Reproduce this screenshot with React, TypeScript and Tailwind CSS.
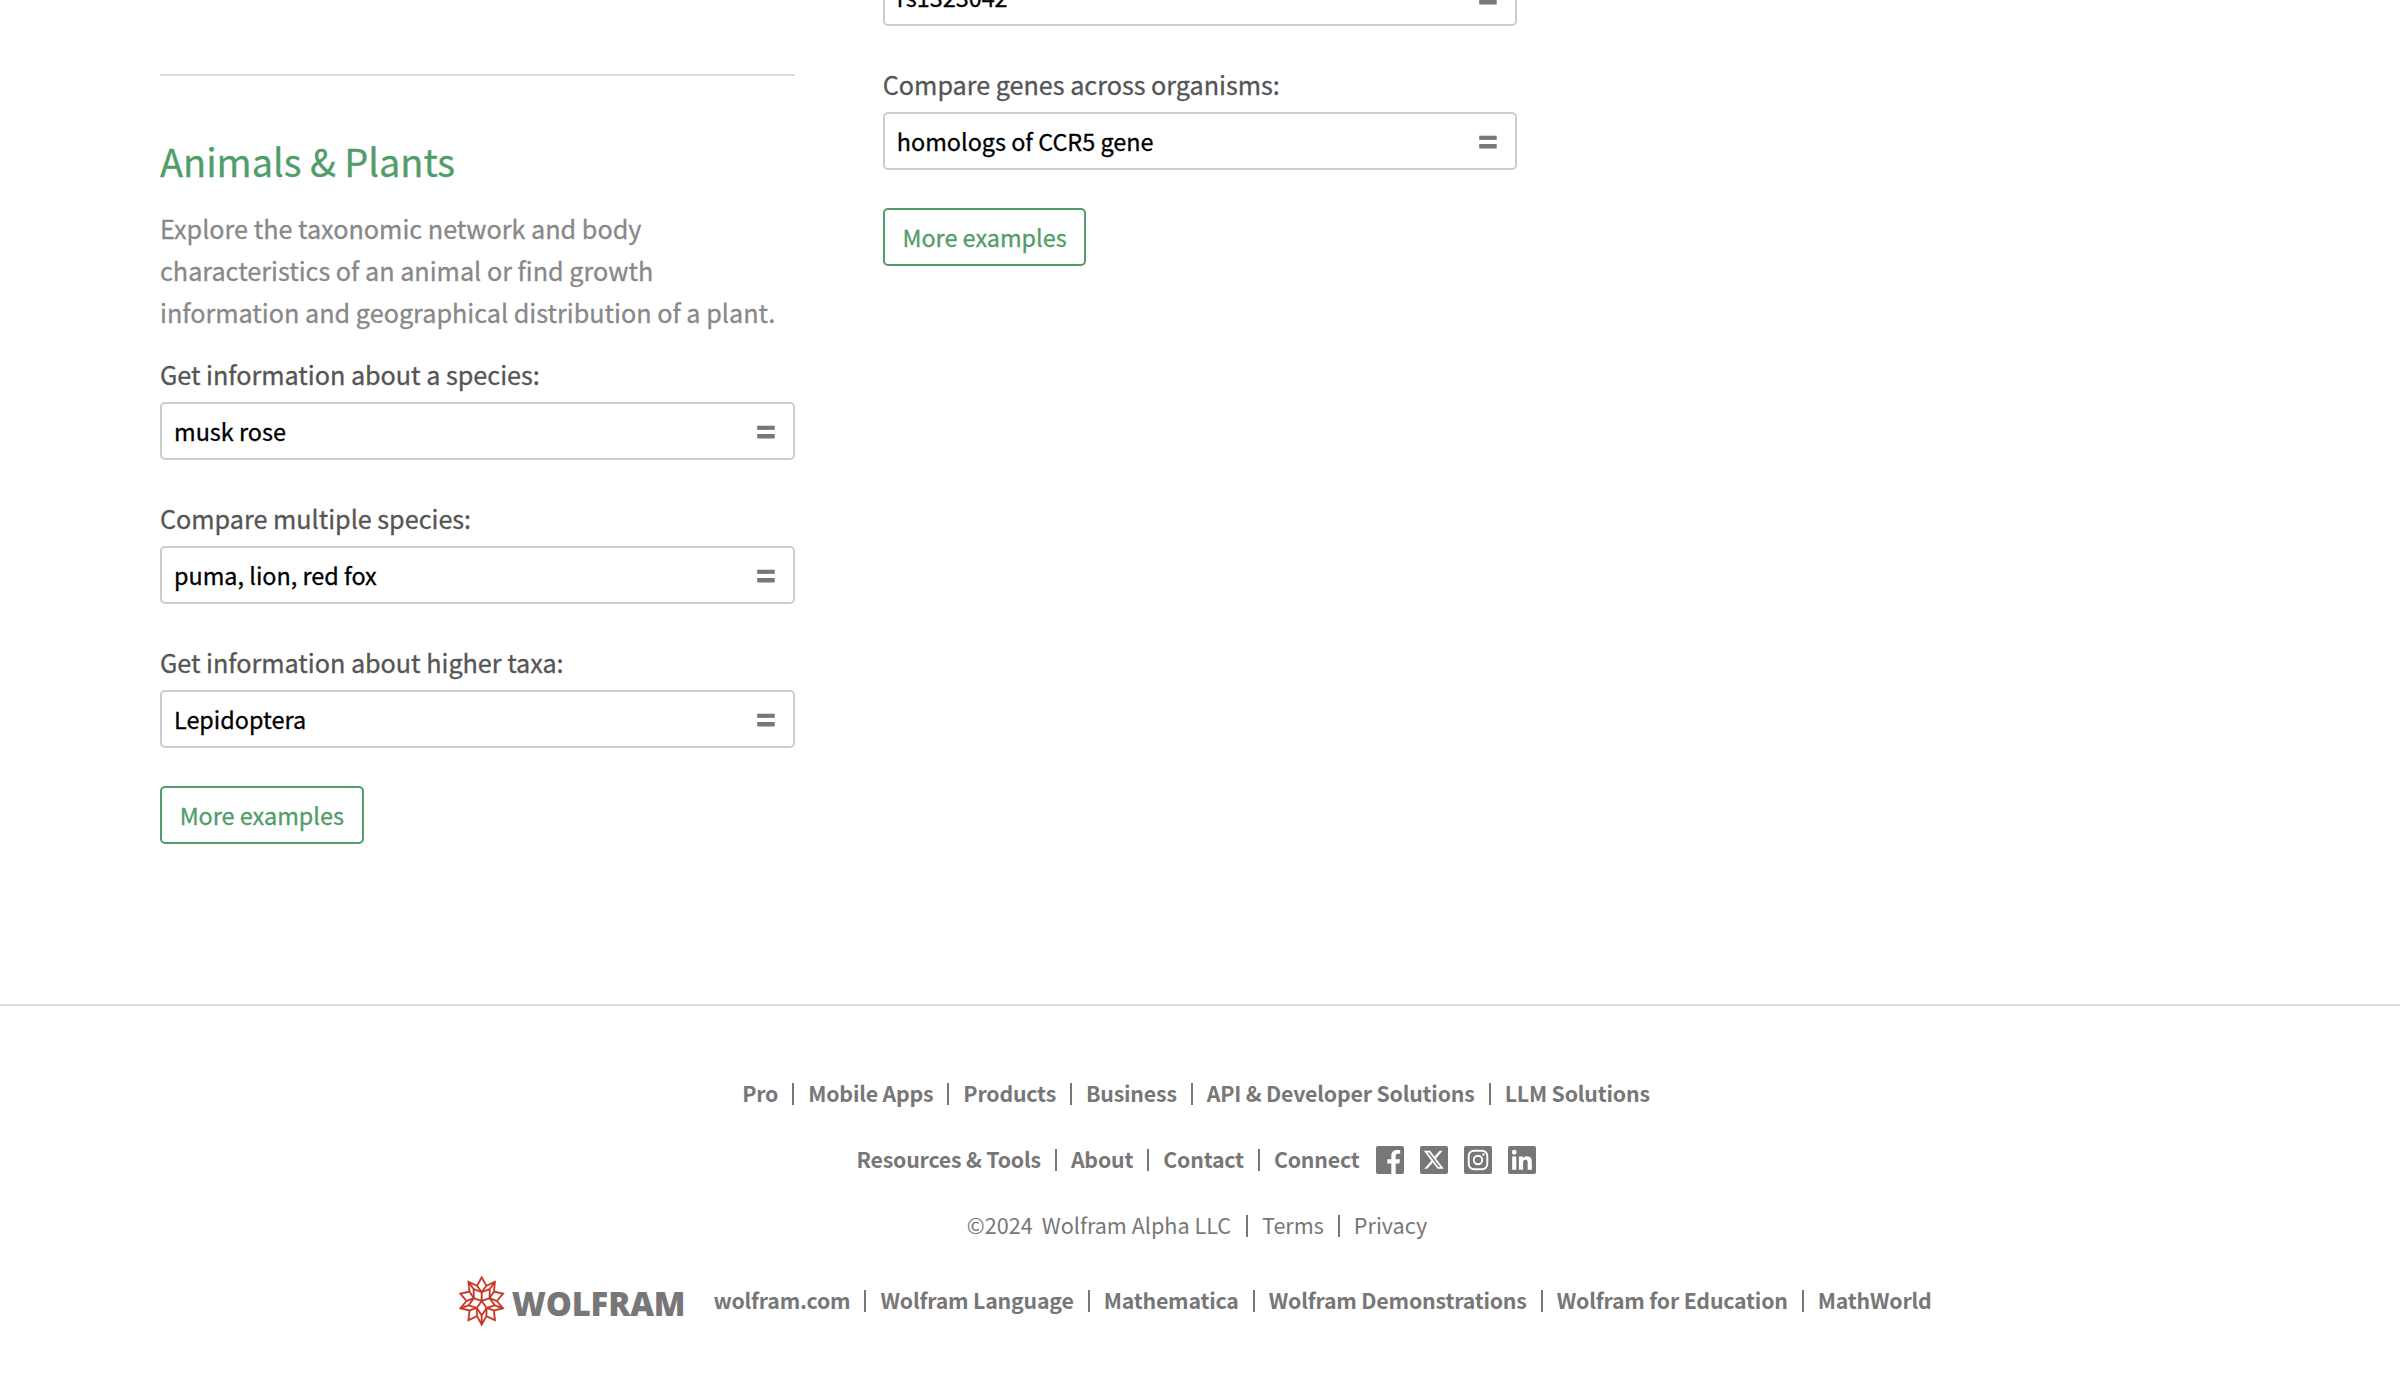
import { Fragment, type ReactNode } from "react";
import { SiWolfram, SiX } from "react-icons/si";

function ExampleBox({ text }: { text: string }) {
  return (
    <div className="flex h-[58px] w-full items-center justify-between rounded-[5px] border-2 border-[#cccccc] bg-white pr-[18px] pl-3">
      <span className="text-[23.4px] leading-[54px] text-black">{text}</span>
      <svg className="mt-0.5 h-[14px] w-[18px]" viewBox="0 0 18 14" fill="#777777">
        <rect x="0.2" y="0.7" width="17.5" height="4.2" />
        <rect x="0.2" y="9" width="17.5" height="4.5" />
      </svg>
    </div>
  );
}

function Example({ label, text }: { label: string; text: string }) {
  return (
    <div>
      <div className="mb-[11px] text-[25.2px] leading-[34px] tracking-[-0.02px] text-[#555555]">{label}</div>
      <ExampleBox text={text} />
    </div>
  );
}

function MoreButton() {
  return (
    <button className="flex h-[58px] w-[203.5px] items-center justify-center rounded-[5px] border-2 border-[#519d69] text-[23.4px] leading-[54px] text-[#519d69]">
      More examples
    </button>
  );
}

function LinkRow({ items, children }: { items: string[]; children?: ReactNode }) {
  return (
    <div className="flex h-[22px] items-start whitespace-nowrap leading-[20px]">
      {items.map((item, i) => (
        <Fragment key={item}>
          {i > 0 && <span className="mx-[14px] h-[22px] w-0.5 shrink-0 bg-[#777777]" />}
          <a className="text-[21.3px] font-bold tracking-[-0.18px]">{item}</a>
        </Fragment>
      ))}
      {children}
    </div>
  );
}

function Tile({ children }: { children: ReactNode }) {
  return (
    <svg className="size-7" viewBox="0 0 28 28" fill="none">
      <rect width="28" height="28" rx="2" fill="#777777" />
      {children}
    </svg>
  );
}

function SocialIcons() {
  return (
    <div className="-mt-[3px] ml-4 flex gap-4">
      <Tile>
        <path
          fill="#fff"
          d="M15.3 28V17.4h-4V13.3h4V10c0-4 2.3-6 5.7-6h3.2v3.8H22c-1.7 0-2.3.8-2.3 2.2v3.3h4.2l-.5 4.1h-3.7V28z"
        />
      </Tile>
      <Tile>
        <SiX x="3.8" y="3.8" size={20} color="#fff" />
      </Tile>
      <Tile>
        <rect x="4.7" y="4.7" width="18.6" height="18.6" rx="5.2" stroke="#fff" strokeWidth="1.9" />
        <circle cx="14" cy="14" r="4.2" stroke="#fff" strokeWidth="1.9" />
        <circle cx="19.5" cy="8.5" r="1.2" fill="#fff" />
      </Tile>
      <Tile>
        <path
          fill="#fff"
          transform="scale(1.1667)"
          d="M20.447 20.452h-3.554v-5.569c0-1.328-.027-3.037-1.852-3.037-1.853 0-2.136 1.445-2.136 2.939v5.667H9.351V9h3.414v1.561h.046c.477-.9 1.637-1.85 3.37-1.85 3.601 0 4.267 2.37 4.267 5.455v6.286zM5.337 7.433a2.062 2.062 0 0 1-2.063-2.065 2.064 2.064 0 1 1 2.063 2.065zm1.782 13.019H3.555V9h3.564v11.452z"
        />
      </Tile>
    </div>
  );
}

export default function App() {
  return (
    <div className="flex h-[1398px] w-[2400px] flex-col overflow-hidden bg-white font-['Noto_Sans_CJK_SC','Open_Sans',sans-serif]">
      <main className="flex h-[1004px] gap-[87.8px] pl-[160px] [-webkit-text-stroke:0.3px]">
        <section className="w-[635px] pt-[74px]">
          <hr className="mb-[58px] border-t-2 border-[#dddddd]" />
          <h2 className="mb-[19px] text-[37.9px] leading-[54px] text-[#519d69]">Animals &amp; Plants</h2>
          <p className="mb-6 text-[25.2px] leading-[42px] whitespace-nowrap text-[#888888]">
            Explore the taxonomic network and body
            <br />
            characteristics of an animal or find growth
            <br />
            information and geographical distribution of a plant.
          </p>
          <div className="mb-[38px] flex flex-col gap-[41px]">
            <Example label="Get information about a species:" text="musk rose" />
            <Example label="Compare multiple species:" text="puma, lion, red fox" />
            <Example label="Get information about higher taxa:" text="Lepidoptera" />
          </div>
          <MoreButton />
        </section>
        <section className="-mt-8 w-[634px]">
          <div className="mb-[38px] flex flex-col gap-[41px]">
            <ExampleBox text="rs1323042" />
            <Example label="Compare genes across organisms:" text="homologs of CCR5 gene" />
          </div>
          <MoreButton />
        </section>
      </main>
      <footer className="flex flex-1 flex-col items-center border-t-2 border-[#dddddd] pt-[77px] pr-2 text-[#777777]">
        <div className="mb-11">
          <LinkRow
            items={["Pro", "Mobile Apps", "Products", "Business", "API & Developer Solutions", "LLM Solutions"]}
          />
        </div>
        <div className="mb-11">
          <LinkRow items={["Resources & Tools", "About", "Contact", "Connect"]}>
            <SocialIcons />
          </LinkRow>
        </div>
        <div className="mb-[53px] flex h-[22px] items-start pl-0.5 text-[21.6px] leading-[20px]">
          <span className="mr-[9px]">©2024</span>
          <a>Wolfram Alpha LLC</a>
          <span className="mr-[14px] ml-[15px] h-[22px] w-0.5 bg-[#777777]" />
          <a>Terms</a>
          <span className="mx-[14px] h-[22px] w-0.5 bg-[#777777]" />
          <a>Privacy</a>
        </div>
        <div className="flex h-[22px] items-start pr-0.5">
          <div className="mr-7 -mt-[14px] flex h-[50px] items-center">
            <SiWolfram
              className="mr-[6px] h-[50px] w-[47.4px]"
              preserveAspectRatio="none"
              color="#c22f1d"
              stroke="#c22f1d"
              strokeWidth="0.25"
            />
            <span className="mt-[5px] font-['Open_Sans',sans-serif] text-[32.8px] leading-[50px] font-extrabold tracking-[-0.15px]">
              WOLFRAM
            </span>
          </div>
          <LinkRow
            items={[
              "wolfram.com",
              "Wolfram Language",
              "Mathematica",
              "Wolfram Demonstrations",
              "Wolfram for Education",
              "MathWorld",
            ]}
          />
        </div>
      </footer>
    </div>
  );
}
